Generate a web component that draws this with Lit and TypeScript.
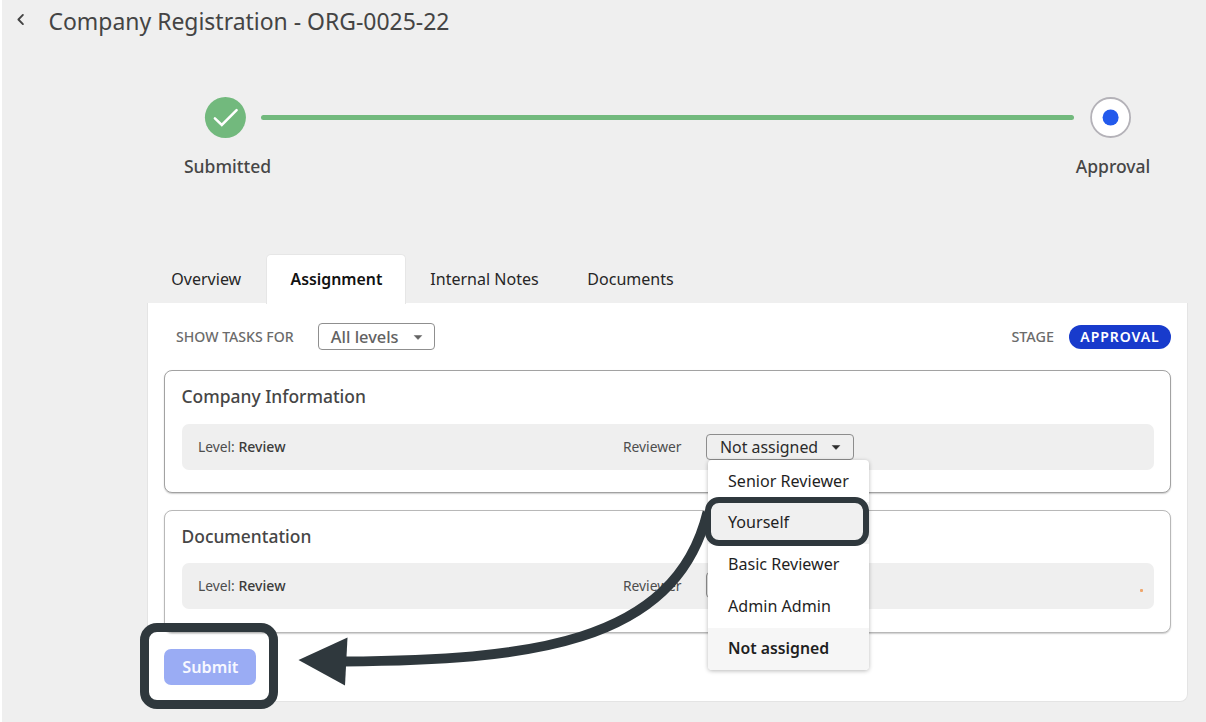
import { LitElement, html, css, svg } from "lit";
import { customElement, property } from "lit/decorators.js";
import { classMap } from "lit/directives/class-map.js";

const caret = html`<svg class="caret" width="10" height="5" viewBox="0 0 10 5" style="display:block">
  ${svg`<path d="M1.2 0.5h7.6L5 4.5z" fill="currentColor" stroke="currentColor" stroke-width=".5" stroke-linejoin="round"/>`}
</svg>`;

@customElement("reviewer-menu")
class ReviewerMenu extends LitElement {
  @property({ type: Array }) options: string[] = [];
  @property() hovered = "";
  @property() selected = "";

  static styles = css`
    :host { display: block; width: 161px; border-radius: 4px; background: #fff;
      box-shadow: 0 1px 4px rgba(0, 0, 0, .28); overflow: hidden; }
    .item { display: flex; align-items: center; box-sizing: border-box; height: 42px; padding: 0 0 2px 20px;
      font-size: 16.1px; color: #1f1f1f; }
    .item:first-child { padding-bottom: 0; }
    .hovered { background: #f0f0f0; }
    .selected { background: #f6f6f6; font-weight: 600; font-size: 15.8px; }
  `;
  render() {
    return this.options.map((o) => html`<div class=${classMap({
      item: true, hovered: o === this.hovered, selected: o === this.selected,
    })}>${o}</div>`);
  }
}

@customElement("task-card")
class TaskCard extends LitElement {
  @property() heading = "";
  @property({ type: Boolean, reflect: true }) soft = false;

  static styles = css`
    :host { display: block; box-sizing: border-box; height: 123px; padding: 0 16.5px;
      border: 1px solid #a2a2a2; border-radius: 8px; background: #fff;
      box-shadow: 0 1px 1.5px rgba(0, 0, 0, .2); }
    :host([soft]) { border-color: #b8b8b8; }
    .heading { height: 53px; line-height: 50px; font-size: 17.43px; font-weight: 500; color: #464646; }
    :host([soft]) .heading { height: 52px; }
    .row { display: flex; align-items: center; box-sizing: border-box; height: 46px; border-radius: 7px;
      background: #efefef; padding: 0 0 1px 16.5px; font-size: 13.8px; color: #4d4d4d; }
    :host([soft]) .row { padding-bottom: 2px; }
    .level { width: 425px; }
    .level b { font-weight: 500; font-size: 14.1px; color: #3c3c3c; }
    .reviewer { width: 83px; }
    .select { display: flex; align-items: center; box-sizing: border-box; width: 148px; height: 26px;
      border: 1px solid #8d8d8d; border-radius: 4px; padding-left: 13px; gap: 13px;
      font-size: 15.9px; color: #2b2b2b; }
    .caret { margin-top: 2px; }
    .dot { width: 3px; height: 3px; margin: 10px 0 0 286px; border-radius: 1px; background: #efa66c; }
  `;
  render() {
    return html`
      <div class="heading">${this.heading}</div>
      <div class="row">
        <span class="level">Level: <b>Review</b></span>
        <span class="reviewer">Reviewer</span>
        <span class="select">Not assigned ${caret}</span>
        ${this.soft ? html`<span class="dot"></span>` : ""}
      </div>`;
  }
}

@customElement("app-root")
class AppRoot extends LitElement {
  static styles = css`
    :host { display: block; position: relative; box-sizing: border-box; width: 1206px; height: 722px;
      overflow: hidden; background: #efefef; border-left: 2px solid #fff;
      font-family: "Noto Sans", "Open Sans", sans-serif; color: #464646; white-space: nowrap; }
    .title { display: flex; align-items: center; height: 42px; padding-left: 14px; gap: 23.5px;
      font-size: 22.94px; color: #444; }
    .back { display: block; margin-top: -3px; }
    .steps { display: flex; align-items: flex-start; padding: 54px 0 0 182px; height: 158px; }
    .step { display: flex; flex-direction: column; align-items: center; font-size: 17.5px; font-weight: 500; }
    .step svg { display: block; }
    .step span { line-height: 24px; margin-top: 16px; }
    .first { width: 87px; }
    .last { width: 75px; }
    .first svg { margin-right: 5px; }
    .last svg { margin-right: 5px; }
    .bar { width: 813px; height: 5px; border-radius: 3px; background: #72b97d; margin: 19px 1.5px 0 -10px; }
    .tabs { display: flex; height: 49px; padding-left: 145px; font-size: 16.05px; color: #262626; }
    .tab { display: flex; align-items: center; padding: 0 24.3px; height: 50px; box-sizing: border-box; }
    .tab.active { width: 140px; margin-right: .5px; padding: 0 0 1px 24px; background: #fff; border: 1px solid #e6e6e6; border-bottom: 0;
      border-radius: 5px 5px 0 0; font-weight: 600; font-size: 15.85px; color: #111; }
    .panel { box-sizing: border-box; width: 1041px; height: 399px; margin-left: 145px;
      background: #fff; border: 1px solid #e4e4e4; border-top: 0; border-radius: 0 0 8px 8px; padding: 0 16px; }
    .filters { display: flex; align-items: center; height: 67px; padding-left: 12px;
      font-size: 14.1px; font-weight: 500; color: #6b6b6b; }
    .levels { display: flex; align-items: center; box-sizing: border-box; width: 117px; height: 27px;
      margin-left: 24px; padding-left: 12px; gap: 14px; border: 1px solid #8f8f8f; border-radius: 4px;
      font-size: 16.4px; color: #626262; }
    .levels .caret { margin-top: 2px; }
    .stage { margin-left: auto; font-size: 14.4px; }
    .pill { display: flex; align-items: center; justify-content: center; width: 102px; height: 24px; margin-left: 15px;
      border-radius: 12px; background: #183bcc; color: #fff; font-size: 14px; font-weight: 600; letter-spacing: .95px; }
    .cards { display: grid; gap: 17px; }
    .submit { display: flex; align-items: center; justify-content: center; width: 92px; height: 36px; margin: 16px 0 0 .4px;
      border-radius: 7px; background: #9aacf4; color: #f7f8ff; font-size: 16.2px; font-weight: 600; }
    .menu { position: absolute; left: 706px; top: 460px; }
    .arrow { position: absolute; left: -2px; top: 0; }
    .ring { position: absolute; box-sizing: border-box; border: solid #2f383d; }
    .ring-option { left: 703px; top: 497px; width: 164px; height: 49px; border-width: 6px; border-radius: 14px; }
    .ring-submit { left: 138px; top: 623px; width: 138px; height: 86px; border-width: 9px; border-radius: 17px; }
  `;
  render() {
    return html`
      <div class="title">
        <svg class="back" width="9" height="13" viewBox="0 0 9 13" fill="none" stroke="#444" stroke-width="1.9"
          stroke-linecap="round" stroke-linejoin="round"><path d="M6.9 1.9 2.4 6.5l4.5 4.6"/></svg>
        <span>Company Registration - ORG-0025-22</span>
      </div>
      <div class="steps">
        <div class="step first">
          <svg width="42" height="42" viewBox="0 0 42 42" fill="none">
            <circle cx="21.4" cy="21.5" r="20.5" fill="#72b97d"/>
            <path d="M10.9 22.4l6.9 6.6L32.6 14.2" stroke="#fff" stroke-width="2.5" stroke-linecap="round"/>
          </svg>
          <span>Submitted</span>
        </div>
        <div class="bar"></div>
        <div class="step last">
          <svg width="42" height="42" viewBox="0 0 42 42">
            <circle cx="20.6" cy="21.5" r="19.5" fill="#fff" stroke="#b4b2b8" stroke-width="1.8"/>
            <circle cx="20.6" cy="21.5" r="8" fill="#235aec"/>
          </svg>
          <span>Approval</span>
        </div>
      </div>
      <div class="tabs">
        <div class="tab">Overview</div>
        <div class="tab active">Assignment</div>
        <div class="tab">Internal Notes</div>
        <div class="tab">Documents</div>
      </div>
      <div class="panel">
        <div class="filters">
          <span>SHOW TASKS FOR</span>
          <span class="levels">All levels ${caret}</span>
          <span class="stage">STAGE</span>
          <span class="pill">APPROVAL</span>
        </div>
        <div class="cards">
          <task-card heading="Company Information"></task-card>
          <task-card heading="Documentation" soft></task-card>
        </div>
        <div class="submit">Submit</div>
      </div>
      <reviewer-menu class="menu" hovered="Yourself" selected="Not assigned"
        .options=${["Senior Reviewer", "Yourself", "Basic Reviewer", "Admin Admin", "Not assigned"]}></reviewer-menu>
      <svg class="arrow" width="1206" height="722" viewBox="0 0 1206 722">
        <clipPath id="shaft"><path d="M298 480H709V722H298z"/></clipPath>
        <path clip-path="url(#shaft)" d="M344 661.5C525 660 675 646 707.5 512" fill="none" stroke="#2f383d" stroke-width="9.8"/>
        <path d="M298.5 660 347.5 637.5 345 685.5z" fill="#2f383d"/>
      </svg>
      <div class="ring ring-option"></div>
      <div class="ring ring-submit"></div>`;
  }
}
